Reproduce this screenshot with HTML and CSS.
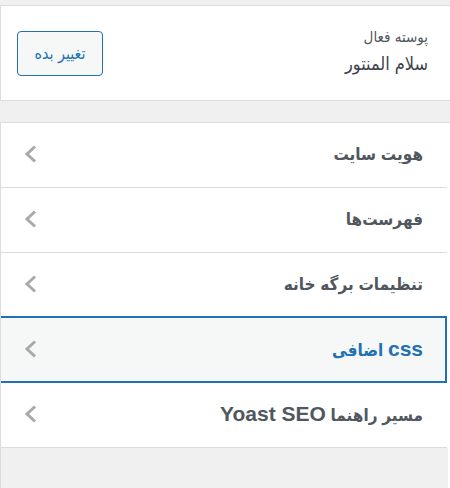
FILE: index.html
```html
<!DOCTYPE html>
<html lang="fa" dir="rtl">
<head>
<meta charset="utf-8">
<title>سفارشی‌سازی</title>
<link rel="stylesheet" href="styles.css">
</head>
<body>
<div class="page">
  <div class="top-band"></div>
  <div class="theme-section">
    <div class="theme-info">
      <span class="theme-label">پوسته فعال</span>
      <span class="theme-name">سلام المنتور</span>
    </div>
    <button class="change-btn" type="button">تغییر بده</button>
  </div>
  <div class="gap"></div>
  <ul class="sections">
    <li class="section">
      <span class="section-title">هویت سایت</span>
      <svg class="chevron" viewBox="0 0 13 18" width="13" height="18"><path d="M11 1.5 L3 9 L11 16.5" /></svg>
    </li>
    <li class="section">
      <span class="section-title">فهرست‌ها</span>
      <svg class="chevron" viewBox="0 0 13 18" width="13" height="18"><path d="M11 1.5 L3 9 L11 16.5" /></svg>
    </li>
    <li class="section">
      <span class="section-title">تنظیمات برگه خانه</span>
      <svg class="chevron" viewBox="0 0 13 18" width="13" height="18"><path d="M11 1.5 L3 9 L11 16.5" /></svg>
    </li>
    <li class="section is-focused">
      <span class="section-title"><span class="latin">css</span> اضافی</span>
      <svg class="chevron" viewBox="0 0 13 18" width="13" height="18"><path d="M11 1.5 L3 9 L11 16.5" /></svg>
    </li>
    <li class="section">
      <span class="section-title">مسیر راهنما <span class="latin">Yoast SEO</span></span>
      <svg class="chevron" viewBox="0 0 13 18" width="13" height="18"><path d="M11 1.5 L3 9 L11 16.5" /></svg>
    </li>
  </ul>
  <div class="bottom"></div>
</div>
</body>
</html>
```
FILE: styles.css
```css
* { box-sizing: border-box; }
html, body {
  margin: 0;
  padding: 0;
  background: #ffffff;
}
body {
  font-family: "Liberation Sans", "DejaVu Sans Condensed", "DejaVu Sans", sans-serif;
  color: #50575e;
}
.page {
  height: 488px;
  display: flex;
  flex-direction: column;
  overflow: hidden;
}
.top-band {
  height: 6px;
  background: #f0f0f1;
  border-bottom: 1px solid #dcdcde;
  flex: none;
}
.theme-section {
  flex: none;
  height: 95px;
  background: #fff;
  border-left: 1px solid #dcdcde;
  border-bottom: 1px solid #dcdcde;
  display: flex;
  align-items: center;
  justify-content: space-between;
  padding: 0 22px 4px 16px;
}
.theme-info {
  display: flex;
  flex-direction: column;
  gap: 6px;
}
.theme-label {
  font-size: 15px;
  line-height: 20px;
}
.theme-name {
  font-size: 18px;
  line-height: 22px;
  color: #3c434a;
}
.change-btn {
  font-family: inherit;
  width: 86px;
  height: 45px;
  background: #f6f7f7;
  border: 1px solid #2271b1;
  border-radius: 4px;
  color: #2271b1;
  font-size: 16px;
  padding: 0;
  margin-top: 4px;
}
.gap {
  flex: none;
  height: 21px;
  background: #f0f0f1;
}
.sections {
  flex: none;
  list-style: none;
  margin: 0;
  padding: 0;
  border-top: 1px solid #dcdcde;
  background: #fff;
}
.section {
  position: relative;
  width: 447px;
  margin-right: 3px;
  height: 65px;
  border-left: 1px solid #dcdcde;
  border-bottom: 1px solid #dcdcde;
  display: flex;
  align-items: center;
  justify-content: space-between;
  padding: 0 24px 2px 23px;
}
.section-title {
  font-size: 17px;
  font-weight: bold;
  color: #50575e;
}
.latin {
  font-size: 21px;
}
.chevron {
  fill: none;
  stroke: #a7aaad;
  stroke-width: 3;
}
.section.is-focused {
  background: #f6f7f7;
}
.section.is-focused .section-title {
  color: #2271b1;
}
.section.is-focused::after {
  content: "";
  position: absolute;
  top: -2px;
  bottom: -1px;
  left: 0;
  right: 0;
  border: 2px solid #2271b1;
  border-left: none;
  pointer-events: none;
}
.bottom {
  flex: 1;
  background: #f0f0f1;
  margin-right: 2px;
  border-left: 1px solid #dcdcde;
}
```
